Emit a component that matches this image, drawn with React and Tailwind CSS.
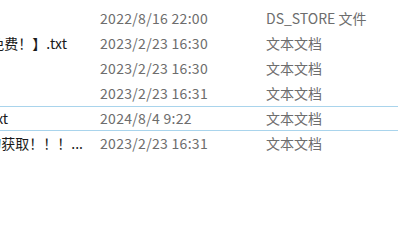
const rows = [
  { name: '', namePad: 'pr-[33px]', date: '2022/8/16 22:00', type: 'DS_STORE 文件' },
  { name: '免费！】.txt', namePad: 'pr-[33px]', date: '2023/2/23 16:30', type: '文本文档' },
  { name: '', namePad: 'pr-[33px]', date: '2023/2/23 16:30', type: '文本文档' },
  { name: '', namePad: 'pr-[33px]', date: '2023/2/23 16:31', type: '文本文档' },
  { name: '.txt', namePad: 'pr-[92px]', date: '2024/8/4 9:22', type: '文本文档', focused: true },
  { name: '资料的获取！！！...', namePad: 'pr-[17px]', date: '2023/2/23 16:31', type: '文本文档' },
];

export default function App() {
  return (
    <div
      className="w-[398px] h-[229px] bg-white overflow-hidden pt-[6px] text-[14px]"
      style={{ fontFamily: '"Noto Sans CJK SC", "Noto Sans", sans-serif' }}
    >
      {rows.map((r, i) => (
        <div
          key={i}
          className={
            r.focused
              ? 'flex items-center h-[25px] border-y border-[#a9d4ec]'
              : 'flex items-center h-[25px] border-y border-transparent'
          }
        >
          <div className={'w-[100px] shrink-0 flex justify-end overflow-hidden ' + r.namePad}>
            <span className="shrink-0 whitespace-nowrap text-[#1a1a1a]">{r.name}</span>
          </div>
          <div className="w-[166px] shrink-0 whitespace-nowrap text-[#6d6d6d] tracking-[0.3px]">{r.date}</div>
          <div className="whitespace-nowrap text-[#6d6d6d]">{r.type}</div>
        </div>
      ))}
    </div>
  );
}
